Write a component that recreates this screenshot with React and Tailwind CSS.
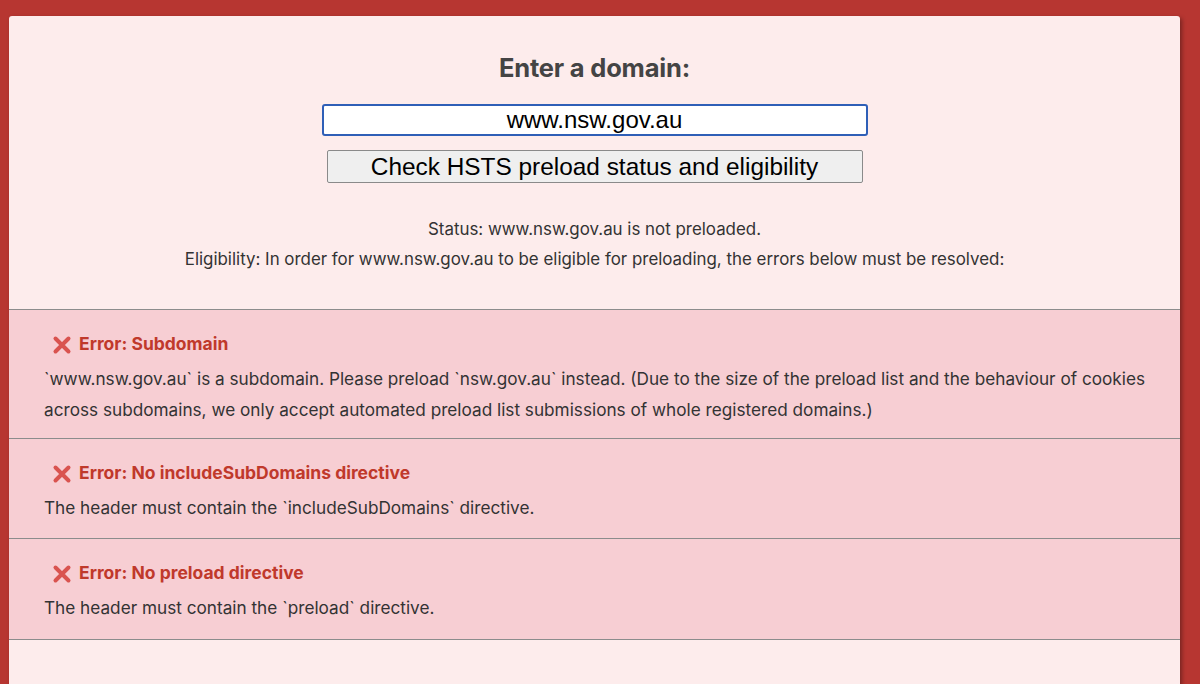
const errors = [
  {
    title: "Error: Subdomain",
    body: "`www.nsw.gov.au` is a subdomain. Please preload `nsw.gov.au` instead. (Due to the size of the preload list and the behaviour of cookies across subdomains, we only accept automated preload list submissions of whole registered domains.)",
    pad: "pb-[13px]",
  },
  {
    title: "Error: No includeSubDomains directive",
    body: "The header must contain the `includeSubDomains` directive.",
    pad: "pb-[15px]",
  },
  {
    title: "Error: No preload directive",
    body: "The header must contain the `preload` directive.",
    pad: "pb-[16px]",
  },
];

const CrossIcon = () => (
  <svg width="20" height="20" viewBox="0 0 20 20" className="shrink-0">
    <path
      d="M3.5 3.5 L16.5 16.5 M16.5 3.5 L3.5 16.5"
      stroke="#d9534f"
      strokeWidth="4"
      strokeLinecap="round"
    />
  </svg>
);

export default function App() {
  return (
    <div className="min-h-screen bg-[#b73631] pt-[16px] pl-[9px] pr-[20px] overflow-hidden h-[684px]">
      <div
        className="bg-[#fdecec] rounded-[3px] shadow-[2px_2px_4px_rgba(0,0,0,0.35)] min-h-[700px] text-[#333]"
        style={{ fontFamily: "Inter, 'Liberation Sans', sans-serif" }}
      >
        {/* Form */}
        <div className="flex flex-col items-center pt-[36px]">
          <h1 className="text-[25.5px] leading-[32px] font-bold text-[#444] tracking-[-0.2px]">
            Enter a domain:
          </h1>
          <input
            defaultValue="www.nsw.gov.au"
            className="mt-[20px] w-[546px] h-[32px] bg-white border-2 border-[#2f5fb7] rounded-[3px] text-center text-[24px] text-black outline-none"
            style={{ fontFamily: "'Liberation Sans', Arial, sans-serif" }}
          />
          <button
            className="mt-[14px] w-[536px] h-[33px] bg-[#efefef] border border-[#8a8a8a] rounded-[2px] text-[24.4px] leading-[30px] text-black"
            style={{ fontFamily: "'Liberation Sans', Arial, sans-serif" }}
          >
            Check HSTS preload status and eligibility
          </button>
          <p className="mt-[31px] text-[16.9px] leading-[30px]">
            Status: www.nsw.gov.au is not preloaded.
          </p>
          <p className="text-[16.9px] leading-[30px]">
            Eligibility: In order for www.nsw.gov.au to be eligible for preloading, the errors below must be resolved:
          </p>
        </div>

        {/* Errors */}
        <div className="mt-[35px] border-b border-[#8c8c8c]">
          {errors.map((e, i) => (
            <div
              key={i}
              className={`bg-[#f7ced3] border-t border-[#8c8c8c] pl-[35px] pr-[30px] pt-[19px] ${e.pad}`}
            >
              <div className="flex items-center gap-[7px] pl-[8px] h-[31px] mb-[3px]">
                <CrossIcon />
                <span className="text-[17.5px] font-bold text-[#c0392b]">{e.title}</span>
              </div>
              <p className="text-[17.2px] leading-[31px]">{e.body}</p>
            </div>
          ))}
        </div>
      </div>
    </div>
  );
}
